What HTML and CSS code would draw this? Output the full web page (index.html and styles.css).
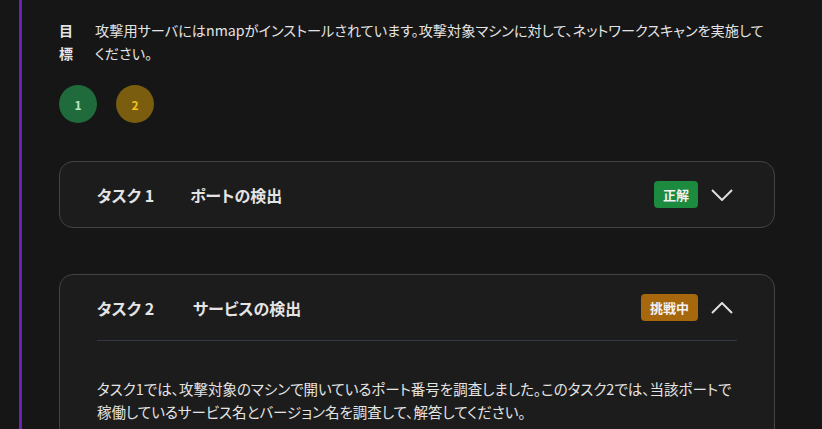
FILE: index.html
```html
<!doctype html>
<html lang="ja">

<head>
  <title>演習 - サービスの検出</title>
  <meta charset="utf-8" />
  <link rel="stylesheet" href="styles.css">
</head>

<body>
  <main class="lesson">
    <section class="goal">
      <h2 class="goal-label">目標</h2>
      <p class="goal-text">攻撃用サーバにはnmapがインストールされています。攻撃対象マシンに対して、ネットワークスキャンを実施してください。</p>
    </section>

    <nav class="steps">
      <span class="step step-done">1</span>
      <span class="step step-active">2</span>
    </nav>

    <article class="task">
      <header class="task-head">
        <span class="task-no">タスク 1</span>
        <span class="task-title">ポートの検出</span>
        <span class="badge badge-ok">正解</span>
        <svg class="chevron" width="22" height="12" viewBox="0 0 22 12">
          <path d="M1 1 L11 11 L21 1" />
        </svg>
      </header>
    </article>

    <article class="task task-open">
      <header class="task-head">
        <span class="task-no">タスク 2</span>
        <span class="task-title">サービスの検出</span>
        <span class="badge badge-try">挑戦中</span>
        <svg class="chevron" width="22" height="12" viewBox="0 0 22 12">
          <path d="M1 11 L11 1 L21 11" />
        </svg>
      </header>
      <div class="task-body">
        <p>タスク1では、攻撃対象のマシンで開いているポート番号を調査しました。このタスク2では、当該ポートで稼働しているサービス名とバージョン名を調査して、解答してください。</p>
      </div>
    </article>
  </main>
</body>

</html>
```

FILE: styles.css
```css
html {
  background: #161616;
  color: #e4e4e4;
  font-family: "Noto Sans CJK JP", "Noto Sans", sans-serif;
  font-feature-settings: "palt";
  font-size: 14px;
}

body {
  margin: 0;
  height: 429px;
  overflow: hidden;
}

.lesson {
  margin-left: 19px;
  border-left: 3px solid #6b22b4;
  padding: 19px 47px 0 37px;
  min-height: 600px;
}

.goal {
  display: flex;
  gap: 22px;
  line-height: 23px;
}

.goal-label {
  width: 1em;
  margin: 0;
  font-size: 14px;
  font-weight: bold;
}

.goal-text {
  margin: 0;
  max-width: 670px;
  font-size: 14.2px;
}

.steps {
  display: flex;
  gap: 19px;
  margin: 20px 0 38px;
}

.step {
  width: 38px;
  height: 38px;
  border-radius: 50%;
  display: flex;
  align-items: center;
  justify-content: center;
  font-size: 12px;
  font-weight: bold;
}

.step-done {
  background: #1f6b3b;
  color: #b9e8c6;
}

.step-active {
  background: #7b5d10;
  color: #f5c21b;
}

.task {
  background: #1c1c1c;
  border: 1px solid #434343;
  border-radius: 14px;
  margin-bottom: 46px;
}

.task-head {
  display: flex;
  align-items: center;
  height: 65px;
  padding: 0 41px 0 37px;
  font-size: 16px;
  font-weight: bold;
}

.task-no {
  width: 93px;
}

.task-title {
  flex: 1;
}

.task-open .task-no {
  width: 96px;
}

.badge {
  font-size: 13px;
  font-weight: bold;
  color: #f2f2f2;
  border-radius: 4px;
  padding: 0 9px;
  line-height: 27px;
  margin-right: 13px;
}

.badge-ok {
  background: #1c8a3f;
}

.badge-try {
  background: #a7670d;
}

.chevron {
  fill: none;
  stroke: #dedede;
  stroke-width: 2;
}

.task-open .task-head {
  height: 65px;
  margin: 0 37px;
  padding: 0 4px 0 0;
  border-bottom: 1px solid #323844;
}

.task-body {
  padding: 36px 37px 30px;
  line-height: 23px;
  font-size: 14.5px;
}

.task-body p {
  margin: 0;
  max-width: 650px;
}
```
